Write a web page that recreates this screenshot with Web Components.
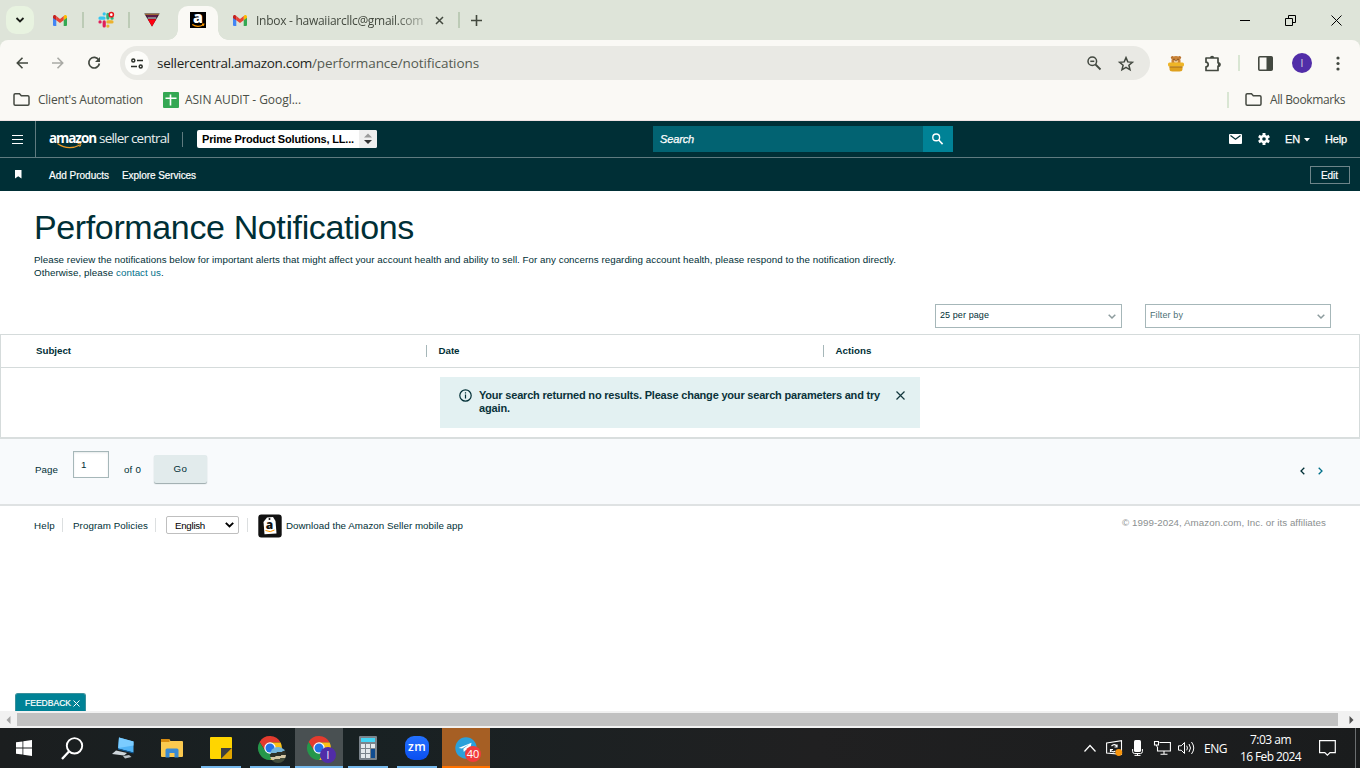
<!DOCTYPE html>
<html lang="en">
<head>
<meta charset="utf-8">
<title>Performance Notifications</title>
<style>
html,body{ margin:0; width:1360px; height:768px; overflow:hidden; background:#fff }
body{ display:flex; flex-direction:column; font-family:"Liberation Sans",Arial,sans-serif; color:#002f36 }
</style>
</head>
<body>
<tab-strip></tab-strip>
<address-bar></address-bar>
<bookmarks-bar></bookmarks-bar>
<seller-header></seller-header>
<seller-subnav></seller-subnav>
<notifications-page></notifications-page>
<scroll-track></scroll-track>
<task-bar></task-bar>

<script>
const UI = `font-family:"Open Sans","Noto Sans",sans-serif;`;

function define(name, html, setup) {
  customElements.define(name, class extends HTMLElement {
    constructor() {
      super();
      this.attachShadow({ mode: "open" }).innerHTML = html;
    }
    connectedCallback() {
      if (setup) setup(this, this.shadowRoot);
    }
  });
}

// One line of text, tracked so that it fills `w` pixels.
define("fit-text", `
<style>:host{ display:inline-block; flex:none; white-space:nowrap } span{ display:inline-block; white-space:nowrap }</style>
<span><slot></slot></span>`, (el, root) => {
  const span = root.querySelector("span");
  const w = parseFloat(el.getAttribute("w"));
  span.style.letterSpacing = "0";
  const natural = span.getBoundingClientRect().width;
  span.style.letterSpacing = (w - natural) / el.textContent.length + "px";
  el.style.width = w + "px";
});

// name: [width, height, markup]
const ICONS = {
  gmail: [14, 11, `<path d="M0 1.8V10a1 1 0 0 0 1 1h2.3V4.4z" fill="#4285f4"/><path d="M14 1.8V10a1 1 0 0 1-1 1h-2.3V4.4z" fill="#34a853"/><path d="M10.7 1.2V5.2L14 2.8V1.7C14 .2 12.300-.5 11.200.4z" fill="#fbbc04"/><path d="M3.300 5.200V1.100L7 3.900l3.700-2.800v4.100L7 8z" fill="#ea4335"/><path d="M0 1.700v1.200l3.300 2.400V1.100L2.700.5C1.600-.5 0 .200 0 1.700z" fill="#c5221f"/>`],
  slack: [16, 16, `<g stroke-width="3.200" stroke-linecap="round"><path d="M6.200 1.800v.1M2 6.200h4" stroke="#36c5f0"/><path d="M9.900 2.300v3.800M14 6.200h.1" stroke="#2eb67d"/><path d="M9.900 14v.1M9.900 9.900H14" stroke="#ecb22e"/><path d="M6.200 9.900V14M2 9.900h.1" stroke="#e01e5a"/></g><circle cx="13.300" cy="2.700" r="2.100" fill="#fff" stroke="#e8151b" stroke-width="1.500"/>`],
  vee: [16, 14, `<path d="M.3.400h15.400L8 13.500z" fill="#201628"/><path d="M1 1.300h14" stroke="#b97d3d"/><path d="M2.500 3h11" stroke="#8a1d58" stroke-width="1.200"/><path d="M3.700 5h8.600" stroke="#efe8ec"/><path d="M3.800 6.300h8.400L8 13.400z" fill="#ff0010"/>`],
  amazon: [16, 16, `<rect width="16" height="16" fill="#000"/><text x="8" y="11.300" text-anchor="middle" font-family="Open Sans" font-weight="800" font-size="16" fill="#fff">a</text><path d="M2.300 12.500q5.500 3.500 11 .200M12 12.200h1.800l-.5 1.500" fill="none" stroke="#f90" stroke-width="1.200"/>`],
  down: [10, 6, `<path d="M1.500 1 5 4.500 8.500 1" fill="none" stroke="#1b1f19" stroke-width="1.800"/>`],
  tabx: [9, 9, `<path d="m1 1 7 7M8 1 1 8" stroke="#43493f" stroke-width="1.500"/>`],
  plus: [11, 11, `<path d="M5.500 0v11M0 5.500h11" stroke="#43493f" stroke-width="1.600"/>`],
  min: [10, 11, `<path d="M0 5.500h10" stroke="#000"/>`],
  restore: [11, 11, `<path d="M.5 3.500h7v7h-7zM3.500 3V.500h7v7H8" fill="none" stroke="#000"/>`],
  close: [11, 11, `<path d="m.5.500 10 10M10.500.500l-10 10" stroke="#000"/>`],
  back: [12, 12, `<path d="M12 6H1.500M6.500.800 1.300 6l5.200 5.200" fill="none" stroke="#434940" stroke-width="1.600"/>`],
  fwd: [12, 12, `<path d="M0 6h10.500M5.500.800 10.700 6l-5.200 5.200" fill="none" stroke="#a9aaa5" stroke-width="1.600"/>`],
  reload: [14, 14, `<path d="M11.800 4.100A5.300 5.300 0 1 0 12.400 7.500" fill="none" stroke="#434940" stroke-width="1.700"/><path d="M13 1v5H8z" fill="#434940"/>`],
  tune: [12, 11, `<g fill="none" stroke="#2b2f29" stroke-width="1.500"><circle cx="2.300" cy="2.500" r="1.500"/><path d="M6 2.500h6M0 8.500h6"/><circle cx="9.700" cy="8.500" r="1.500"/></g>`],
  zoomout: [14, 14, `<g fill="none" stroke="#434940" stroke-width="1.500"><circle cx="5.300" cy="5.300" r="4.300"/><path d="M3.300 5.300h4"/><path d="m8.500 8.500 5 5" stroke-width="1.800"/></g>`],
  star: [16, 15, `<path d="m8 1.600 1.800 4.300 4.600.400-3.500 3 1.100 4.500L8 11.400l-4 2.400 1.100-4.500-3.500-3 4.600-.400z" fill="none" stroke="#434940" stroke-width="1.500"/>`],
  bear: [16, 17, `<circle cx="4.500" cy="2.600" r="1.600" fill="#b86f28"/><circle cx="11.500" cy="2.600" r="1.600" fill="#b86f28"/><path d="M3.500 8V5.500a4.500 4.500 0 0 1 9 0V8z" fill="#ca8438"/><ellipse cx="8" cy="6.500" rx="2" ry="1.500" fill="#f5d6a5"/><path d="M5.500 4.300h1M9.500 4.300h1M7.400 5.700h1.200" stroke="#4d280e"/><rect y="7.500" width="16" height="4" rx="1.500" fill="#efb526"/><path d="M1.500 11.500h13V14q0 2.500-3 2.500h-7q-3 0-3-2.500z" fill="#dfa11e"/><path d="M1.500 12h13" stroke="#a76c13"/>`],
  puzzle: [17, 17, `<path d="M2 3h12v4.800c2.600 0 2.600 3.400 0 3.400V15.500H2v-3.700c2.900 0 2.900-4.600 0-4.600z" fill="none" stroke="#434940" stroke-width="1.700" stroke-linejoin="round"/><path d="M6 3c0-3 4.200-3 4.200 0zM14 7.500c3 0 3 4 0 4z" fill="#434940"/>`],
  panel: [15, 15, `<rect x=".8" y=".8" width="13.400" height="13.400" rx="1" fill="none" stroke="#434940" stroke-width="1.600"/><path d="M8.500 1h5.700v13H8.500z" fill="#434940"/>`],
  dots: [4, 15, `<g fill="#434940"><circle cx="2" cy="2" r="1.600"/><circle cx="2" cy="7.500" r="1.600"/><circle cx="2" cy="13" r="1.600"/></g>`],
  folder: [17, 13, `<path d="M1 2q0-1.200 1.200-1.200H6.500l1.800 2h6.500Q16 2.800 16 4v7q0 1.200-1.200 1.200H2.200Q1 12.200 1 11z" fill="none" stroke="#454a42" stroke-width="1.500"/>`],
  sheet: [16, 16, `<rect width="16" height="16" rx="1" fill="#34a853"/><path d="M2.500 6.300h11M7.500 2.500v11" stroke="#fff" stroke-width="1.600"/>`],
  menu: [11, 9, `<path d="M0 .5h11M0 4.500h11M0 8.500h11" stroke="#fff" stroke-width="1.200"/>`],
  smile: [26, 6, `<path d="M.5.500Q11 8 23 2" fill="none" stroke="#f19a24" stroke-width="1.300"/><path d="M20.500.800q3-.800 3.500-.200.300.800-1.300 3.200" fill="none" stroke="#f19a24"/>`],
  updown: [8, 12, `<path d="m0 4.500 4-4 4 4z" fill="#9b9b9b"/><path d="m0 7 4 4 4-4z" fill="#333"/>`],
  search: [11, 12, `<circle cx="4.200" cy="4.400" r="3.400" fill="none" stroke="#fff" stroke-width="1.400"/><path d="m6.700 7 3.900 4.100" stroke="#fff" stroke-width="1.600"/>`],
  mail: [13, 10, `<rect width="13" height="10" rx="1" fill="#fff"/><path d="m1.500 1.500 5 3.800 5-3.800" fill="none" stroke="#002f36" stroke-width="1.200"/>`],
  gear: [12, 12, `<path d="M6 0v12M.8 3l10.400 6M.8 9l10.400-6" stroke="#fff" stroke-width="2.900"/><circle cx="6" cy="6" r="3.200" fill="none" stroke="#fff" stroke-width="2.200"/><circle cx="6" cy="6" r="1.800" fill="#002f36"/>`],
  caret: [6, 3, `<path d="M0 0h6L3 3.500z" fill="#fff"/>`],
  flag: [7, 9, `<path d="M0 0h6.500v8.500L3.200 6.300 0 8.500z" fill="#fff"/>`],
  chev: [8, 5, `<path d="M.7.700 4 4 7.300.700" fill="none" stroke="#8c9b9d" stroke-width="1.500"/>`],
  info: [13, 13, `<circle cx="6.500" cy="6.500" r="5.700" fill="none" stroke="#002f36" stroke-width="1.200"/><path d="M6.500 5.500v4M6.500 3.200v1.300" stroke="#002f36" stroke-width="1.200"/>`],
  x: [9, 9, `<path d="m.5.500 8 8M8.500.500l-8 8" stroke="#12373d" stroke-width="1.200"/>`],
  xw: [7, 7, `<path d="m.5.500 6 6M6.500.500l-6 6" stroke="#fff" stroke-width="1"/>`],
  left: [5, 8, `<path d="M4.300.700 1 4l3.300 3.300" fill="none" stroke="#002f36" stroke-width="1.300"/>`],
  right: [5, 8, `<path d="M.7.700 4 4 .7 7.300" fill="none" stroke="#00708a" stroke-width="1.300"/>`],
  seldown: [9, 6, `<path d="m.8.800 3.700 3.700L8.200.800" fill="none" stroke="#000" stroke-width="1.900"/>`],
  app: [24, 24, `<rect x=".3" y=".5" width="23.400" height="23" rx="3" fill="#111"/><path d="m9 3.500 6-.5 2.500 4 1 12.500-12 .8L5.500 8z" fill="#fff"/><circle cx="11.500" cy="5" r="1" fill="#111"/><text x="11.500" y="15" text-anchor="middle" font-family="Open Sans" font-weight="800" font-size="12" fill="#111">a</text><path d="M7.500 16.500q5 2.500 9-.500" fill="none" stroke="#f90"/>`],
  sleft: [5, 8, `<path d="M4.500 0v8L.5 4z" fill="#a3a3a3"/>`],
  sright: [5, 8, `<path d="M.5 0v8l4-4z" fill="#505050"/>`],
  win: [16, 16, `<path d="M0 2.300 6.500 1.400V7.500H0zM7.300 1.300 16 0v7.500H7.300zM0 8.400h6.500v6.200L0 13.700zM7.300 8.400H16V16l-8.700-1.300z" fill="#fff"/>`],
  find: [23, 23, `<circle cx="13.500" cy="8.800" r="7.700" fill="none" stroke="#fff" stroke-width="1.900"/><path d="m8 14.500-7 7.500" stroke="#fff" stroke-width="2.300"/>`],
  pc: [24, 22, `<path d="m8 .5 14.500 4V15.500L7 11.500z" fill="#51b3f5"/><path d="m8 .5 14.500 4v4L7.300 11z" fill="#7bccff"/><path d="m7 11.500 15.500 4v1L7 12.500z" fill="#0b5c9e"/><path d="m5 13.500 11 2.500-3 2.500-12-1.500z" fill="#cfd6da"/><path d="m12 19 6-1 2.500 2-6.500 1.500z" fill="#b8c0c5"/>`],
  files: [22, 19, `<path d="M0 1q0-1 1-1h7l1.500 2H21q1 0 1 1v14q0 1-1 1H1q-1 0-1-1z" fill="#fbc94f"/><path d="M0 1q0-1 1-1h7.500v3H0z" fill="#d98c10"/><path d="M4.500 11q0-1.500 1.500-1.500h10q1.500 0 1.500 1.500v7.500h-4V14h-5v4.500h-4z" fill="#398ad4"/>`],
  note: [22, 22, `<path d="M0 1q0-1 1-1h20q1 0 1 1v10L11 22H1q-1 0-1-1z" fill="#ffd500"/><path d="M11 22V11h11z" fill="#3e3e40"/><path d="M22 11v10q0 1-1 1H11z" fill="#e2a600"/>`],
  chrome: [24, 24, `<path d="M12 6.400h10.600A12 12 0 0 0 1.600 6l5.500 8.800L12 12z" fill="#e33b2e"/><path d="M22.600 6.400H12v5.600l4.900 2.800L12 24A12 12 0 0 0 22.600 6.400z" fill="#fbc116"/><path d="M1.600 6l5.500 8.800L12 12l4.900 2.800L12 24A12 12 0 0 1 1.600 6z" fill="#25974a"/><circle cx="12" cy="12" r="5.700" fill="#fff"/><circle cx="12" cy="12" r="4.500" fill="#2573e8"/>`],
  calc: [18, 24, `<rect width="18" height="24" rx="1" fill="#7b848c"/><rect x="2" y="2" width="14" height="4" fill="#43d5f5"/><g fill="#e4e9ec"><path d="M2 8h4v4H2zM7 8h4v4H7zM12 8h4v4h-4zM2 13h4v4H2zM7 13h4v4H7zM2 18h4v4H2zM7 18h4v4H7z"/></g><path d="M12 13h4v9h-4z" fill="#0f4c91"/>`],
  plane: [22, 22, `<circle cx="11" cy="11" r="10.700" fill="#2ba0da"/><path d="m3.500 11 13-5.200-2 10-4-2.500-1.700 1.600-.5-3.200 6-4.500-7.300 4.400z" fill="#fff"/>`],
  up: [12, 7, `<path d="m.5 6.500 5.500-6 5.500 6" fill="none" stroke="#fff" stroke-width="1.200"/>`],
  update: [17, 16, `<path d="M.6 3 15.500.600v13.800L.6 13z" fill="none" stroke="#fff" stroke-width="1.100"/><path d="M11 4.500v2.500H8.500M11 6.500Q8.500 3 5.500 6M4.500 12V9.500H7M4.500 10q2 3 5 1" fill="none" stroke="#fff" stroke-width="1.200"/><circle cx="12.800" cy="12.500" r="3.400" fill="#f8950d"/>`],
  mic: [11, 16, `<rect x="2" width="7" height="12" rx="1.500" fill="#fff"/><path d="M.6 9v2.500q0 2 2 2h5.800q2 0 2-2V9M5.500 13v2.500M2.500 15.400h6" fill="none" stroke="#fff"/>`],
  net: [17, 14, `<path d="M5.500 1.500h10.900v8.500H3.500V5.500M10 10v3.300M6.500 13.300h7M.5.500h4v3.500h-4zM2.500 4v1.500" fill="none" stroke="#fff" stroke-width="1.100"/>`],
  sound: [17, 14, `<path d="M.5 4.800h2.700L6.500 1.500v11L3.200 9.200H.5zM8.700 4.700q1.500 2.300 0 4.600M11 3q3 4 0 8M13.500 1q4.500 6 0 12" fill="none" stroke="#fff"/>`],
  chat: [17, 16, `<path d="M.6.600h15.700v12H11l-2.600 2.600L5.800 12.600H.6z" fill="none" stroke="#fff" stroke-width="1.200"/>`],
};

define("ui-icon", `<style>:host,div{ display:block; flex:none } svg{ display:block; overflow:visible }</style><div></div>`, (el, root) => {
  const [w, h, body] = ICONS[el.getAttribute("name")];
  root.querySelector("div").innerHTML = `<svg width="${w}" height="${h}" viewBox="0 0 ${w} ${h}" aria-hidden="true">${body}</svg>`;
});

define("tab-strip", `
<style>
:host{ display:flex; flex:none; height:40px; box-sizing:border-box; padding-left:6px; background:#dee4d9; align-items:center; ${UI} font-size:12px; color:#43493f }
.cell{ width:40px; height:28px; display:grid; place-items:center }
.list{ width:28px; border-radius:10px; background:#e8f3e0; margin-right:6px }
.sep{ width:2px; height:16px; margin:0 2px; background:#bccbb6 }
.active{ align-self:flex-end; height:34px; margin-left:6px; background:#faf9f5; border-radius:10px 10px 0 0; position:relative; box-sizing:border-box; padding-bottom:6px }
.active::before,.active::after{ content:""; position:absolute; bottom:0; width:10px; height:10px; background:radial-gradient(circle at 0 0,transparent 9.5px,#faf9f5 10px) }
.active::before{ left:-10px } .active::after{ right:-10px; transform:scaleX(-1) }
.tab{ display:flex; align-items:center; width:240px; box-sizing:border-box; padding-left:15px }
.title{ margin:0 12px 0 9px; -webkit-mask:linear-gradient(90deg,#000 82%,rgba(0,0,0,.35) 99%) }
.plus{ margin-left:10px }
.win{ margin-left:auto; display:flex; gap:35px; margin-right:18px }
</style>
<div class="cell list"><ui-icon name="down"></ui-icon></div>
<div class="cell"><ui-icon name="gmail"></ui-icon></div><div class="sep"></div>
<div class="cell"><ui-icon name="slack"></ui-icon></div><div class="sep"></div>
<div class="cell"><ui-icon name="vee"></ui-icon></div>
<div class="cell active"><ui-icon name="amazon"></ui-icon></div>
<div class="tab"><ui-icon name="gmail"></ui-icon><fit-text class="title" w="167">Inbox - hawaiiarcllc@gmail.com</fit-text><ui-icon name="tabx"></ui-icon></div>
<div class="sep" style="margin:0"></div>
<ui-icon class="plus" name="plus" style="margin-left:11px"></ui-icon>
<div class="win"><ui-icon name="min"></ui-icon><ui-icon name="restore"></ui-icon><ui-icon name="close"></ui-icon></div>`);

define("address-bar", `
<style>
:host{ display:block; flex:none; height:46px; background:#dee4d9; ${UI} }
.bar{ display:flex; height:46px; align-items:center; background:#faf9f5; border-radius:8px 8px 0 0; padding-left:16px; box-sizing:border-box }
.nav{ display:flex; gap:24px; align-items:center; width:104px }
.pill{ display:flex; align-items:center; width:1030px; height:34px; border-radius:17px; background:#e9e9e4; box-sizing:border-box; padding:0 16px 0 5px; font-size:13.5px; color:#1d1f1b }
.site{ width:24px; height:24px; border-radius:50%; background:#fdfdfa; display:grid; place-items:center; margin-right:8px }
.path{ color:#555b52 }
.tools{ margin-left:auto; display:flex; gap:17px; align-items:center }
.right{ display:flex; align-items:center; margin-left:18px }
.sep{ width:2px; height:16px; background:#d9e6d3; margin:0 18px 0 17px }
.me{ width:20px; height:20px; border-radius:50%; background:#512da8; color:#ddd; font-size:10px; line-height:20px; text-align:center; margin:0 24px 0 19px }
</style>
<div class="bar">
  <div class="nav"><ui-icon name="back"></ui-icon><ui-icon name="fwd"></ui-icon><ui-icon name="reload" style="margin-left:-1px"></ui-icon></div>
  <div class="pill">
    <div class="site"><ui-icon name="tune"></ui-icon></div>
    <fit-text w="155">sellercentral.amazon.com</fit-text><fit-text class="path" w="167">/performance/notifications</fit-text>
    <div class="tools"><ui-icon name="zoomout"></ui-icon><ui-icon name="star"></ui-icon></div>
  </div>
  <div class="right"><ui-icon name="bear"></ui-icon><ui-icon name="puzzle" style="margin-left:20px"></ui-icon><div class="sep"></div><ui-icon name="panel"></ui-icon><div class="me">I</div><ui-icon name="dots"></ui-icon></div>
</div>`);

define("bookmarks-bar", `
<style>
:host{ display:flex; flex:none; height:35px; box-sizing:border-box; padding:0 15px 7px 13px; align-items:center; background:#faf9f5; border-bottom:1px solid #efe3e4; ${UI} font-size:12px; color:#4a4f47 }
ui-icon + fit-text{ margin-left:8px }
.sheet{ margin-left:20px }
.sheet + fit-text{ margin-left:6px !important }
.sep{ margin-left:auto; width:2px; height:16px; background:#d9e6d3; margin-right:16px }
</style>
<ui-icon name="folder"></ui-icon><fit-text w="105">Client's Automation</fit-text>
<ui-icon class="sheet" name="sheet"></ui-icon><fit-text w="116">ASIN AUDIT - Googl...</fit-text>
<div class="sep"></div><ui-icon name="folder"></ui-icon><fit-text w="75">All Bookmarks</fit-text>`);

define("seller-header", `
<style>
:host{ display:flex; flex:none; height:37px; box-sizing:border-box; border-bottom:1px solid #5f7b80; background:#002f36; color:#fff; align-items:center; font-size:11px; font-weight:400; -webkit-text-stroke:.25px #fff }
.menu{ width:36px; height:36px; box-sizing:border-box; border-right:1px solid #5f7b80; display:grid; place-items:center }
.logo{ position:relative; display:flex; margin-left:13px; height:20px; line-height:18px; ${UI} font-size:13.5px; -webkit-text-stroke:0 }
.logo b{ margin-right:3px; font-weight:700 } .logo .sc{ font-weight:400; color:#e8eeee }
.logo ui-icon{ position:absolute; left:8px; top:14px }
.bar{ width:1px; height:15px; background:#5f7b80; margin:0 14px 0 13px }
.store{ display:flex; width:180px; height:18px; box-sizing:border-box; background:#fff; border-radius:2px; color:#000; align-items:center; justify-content:space-between; padding-left:5px; overflow:hidden; font-weight:700; -webkit-text-stroke:0 }
.knob{ width:18px; height:18px; background:#efefef; display:grid; place-items:center }
.search{ display:flex; width:300px; height:26px; margin-left:276px; background:#026372; align-items:center; box-sizing:border-box; padding-left:7px; justify-content:space-between; font-style:italic }
.go{ width:30px; height:26px; box-sizing:border-box; padding-right:2px; background:#008296; display:grid; place-items:center }
.right{ margin-left:auto; margin-right:13px; display:flex; align-items:center }
</style>
<div class="menu"><ui-icon name="menu"></ui-icon></div>
<div class="logo"><b><fit-text w="47">amazon</fit-text></b><fit-text class="sc" w="70">seller central</fit-text><ui-icon name="smile"></ui-icon></div>
<div class="bar"></div>
<div class="store"><fit-text w="152">Prime Product Solutions, LL...</fit-text><div class="knob"><ui-icon name="updown"></ui-icon></div></div>
<div class="search"><fit-text w="34">Search</fit-text><div class="go"><ui-icon name="search"></ui-icon></div></div>
<div class="right"><ui-icon name="mail"></ui-icon><ui-icon name="gear" style="margin:0 15px 0 16px"></ui-icon><fit-text w="15">EN</fit-text><ui-icon name="caret" style="margin:0 15px 0 4px"></ui-icon><fit-text w="22">Help</fit-text></div>`);

define("seller-subnav", `
<style>
:host{ display:flex; flex:none; height:33px; box-sizing:border-box; background:#002f36; color:#fff; align-items:center; padding:1px 10px 0 15px; font-size:10px; -webkit-text-stroke:.2px #fff }
.edit{ margin-left:auto; width:40px; height:18px; box-sizing:border-box; border:1px solid #6d8589; display:grid; place-items:center; padding-right:1px }
</style>
<ui-icon name="flag" style="margin:-2px 27px 0 0"></ui-icon>
<fit-text w="60">Add Products</fit-text><fit-text w="74" style="margin-left:13px">Explore Services</fit-text>
<div class="edit"><fit-text w="17">Edit</fit-text></div>`);

define("select-box", `
<style>
:host{ display:flex; box-sizing:border-box; height:24px; border:1px solid #a6b7b9; padding:0 5px 2px 4px; align-items:center; justify-content:space-between; font-size:9px; background:#fff }
ui-icon{ margin-top:3px }
</style>
<slot></slot><ui-icon name="chev"></ui-icon>`);

define("notice-box", `
<style>
:host{ display:flex; width:480px; height:51px; box-sizing:border-box; background:#e3f1f2; padding:12px 15px 0 19px; font-size:11px; line-height:13px; font-weight:700; color:#0a333a }
.msg{ margin:0 16px 0 7px; width:401px; display:flex; flex-direction:column; align-items:flex-start }
</style>
<ui-icon name="info"></ui-icon><div class="msg"><slot></slot></div><ui-icon name="x" style="margin-top:2px"></ui-icon>`);

define("pager-bar", `
<style>
:host{ display:flex; flex:none; height:69px; box-sizing:border-box; border-top:2px solid #d9dede; border-bottom:2px solid #dfe2e3; background:#f8fafc; padding:12px 36px 0 35px; align-items:flex-start; font-size:9.75px; line-height:12px }
.in{ width:36px; height:27px; box-sizing:border-box; border:1px solid #a6b7b9; background:#fff; box-shadow:inset 0 1px 2px #e5e9ea; padding:7px 0 0 7px; margin:0 15px }
.go{ width:53px; height:28px; margin:4px 0 0 13px; box-sizing:border-box; background:#e2ebec; box-shadow:0 1px 1px #9ba9ab; border-radius:2px; display:flex; justify-content:center; padding-top:8px }
.lbl{ margin-top:13px }
.arrows{ margin:16px 1px 0 auto; display:flex; gap:13px }
</style>
<fit-text class="lbl" w="23">Page</fit-text><div class="in">1</div><fit-text class="lbl" w="17">of 0</fit-text>
<div class="go"><fit-text w="14">Go</fit-text></div>
<div class="arrows"><ui-icon name="left"></ui-icon><ui-icon name="right"></ui-icon></div>`);

define("page-footer", `
<style>
:host{ display:flex; flex:none; height:40px; padding:0 34px; align-items:center; font-size:9.75px; box-sizing:border-box }
.sep{ width:1px; height:14px; background:#dcdfe0 }
.lang{ width:73px; height:18px; box-sizing:border-box; border:1px solid #bfbfbf; border-radius:2px; display:flex; align-items:center; justify-content:space-between; padding:0 4px 0 8px; color:#000; margin:0 8px 0 10px }
.copy{ margin-left:auto; margin-top:-5px; color:#8b8f90 }
</style>
<fit-text w="21">Help</fit-text><div class="sep" style="margin:0 10px 0 7px"></div>
<fit-text w="75">Program Policies</fit-text><div class="sep" style="margin-left:7px"></div>
<div class="lang"><fit-text w="30">English</fit-text><ui-icon name="seldown"></ui-icon></div><div class="sep" style="margin-right:10px"></div>
<ui-icon name="app" style="margin-top:2px"></ui-icon><fit-text w="177" style="margin-left:4px">Download the Amazon Seller mobile app</fit-text>
<fit-text class="copy" w="204">© 1999-2024, Amazon.com, Inc. or its affiliates</fit-text>`);

define("notifications-page", `
<style>
:host{ display:flex; flex:none; flex-direction:column; height:520px; background:#fff; font-size:9.75px }
.intro{ padding:16px 0 0 34px; height:97px; line-height:13px }
h1{ margin:0 0 6px; font-size:34px; line-height:40px; font-weight:400 }
.intro fit-text{ display:block }
.intro .last{ display:flex } .link{ color:#00708a }
.filters{ display:flex; justify-content:flex-end; gap:23px; padding-right:29px; height:30px }
.filters select-box{ width:187px } .filters select-box + select-box{ width:186px; color:#4d7074 }
.table{ border:1px solid #d5dbdb; border-bottom:0; height:103px; box-sizing:border-box }
.head{ display:flex; align-items:center; height:32px; border-bottom:1px solid #d5dbdb; font-weight:700; font-size:9.75px }
.head div{ width:397px; box-sizing:border-box; height:12px; line-height:12px; border-left:1px solid #a6b7b9; padding-left:11.5px }
.head div:first-child{ width:425px; border:0; padding-left:35px }
.body{ display:flex; justify-content:center; padding-top:9px }
page-footer{ margin-top:-1px }
.feedback{ margin:auto 0 0 15px; width:71px; height:18px; box-sizing:border-box; background:#008296; border:1px solid #39909b; border-bottom:0; border-radius:3px 3px 0 0; color:#fff; font-size:8.500px; display:flex; align-items:center; padding-left:9px; -webkit-text-stroke:.2px #fff }
</style>
<div class="intro">
  <h1><fit-text w="380">Performance Notifications</fit-text></h1>
  <fit-text w="862">Please review the notifications below for important alerts that might affect your account health and ability to sell. For any concerns regarding account health, please respond to the notification directly.</fit-text>
  <div class="last"><fit-text w="82">Otherwise, please&nbsp;</fit-text><fit-text class="link" w="45">contact us</fit-text>.</div>
</div>
<div class="filters"><select-box><fit-text w="49">25 per page</fit-text></select-box><select-box><fit-text w="33">Filter by</fit-text></select-box></div>
<div class="table">
  <div class="head"><div><fit-text w="35">Subject</fit-text></div><div><fit-text w="21">Date</fit-text></div><div><fit-text w="36">Actions</fit-text></div></div>
  <div class="body"><notice-box><fit-text w="401">Your search returned no results. Please change your search parameters and try</fit-text><fit-text w="31">again.</fit-text></notice-box></div>
</div>
<pager-bar></pager-bar>
<page-footer></page-footer>
<div class="feedback"><fit-text w="46">FEEDBACK</fit-text><ui-icon name="xw" style="margin:2px 0 0 2px"></ui-icon></div>`);

define("scroll-track", `
<style>
:host{ display:flex; flex:none; height:17px; box-sizing:border-box; background:#f1f1f1; align-items:center; padding:0 6px }
.thumb{ flex:1; height:13px; background:#c1c1c1; margin:0 11px 0 6px }
</style>
<ui-icon name="sleft"></ui-icon><div class="thumb"></div><ui-icon name="sright"></ui-icon>`);

define("task-item", `
<style>
:host{ display:grid; flex:none; width:48px; height:40px; box-sizing:border-box; place-items:center; position:relative }
:host([open])::after{ content:""; position:absolute; left:4px; right:4px; bottom:0; height:2px; background:#76b9ed }
:host([current]){ background:#495052 } :host([current])::after,:host([alert])::after{ left:0; right:0 }
:host([alert]){ background:#a65f24 } :host([alert])::after{ background:#ff7200 }
</style><slot></slot>`);

define("task-bar", `
<style>
:host{ display:flex; flex:none; height:40px; background:linear-gradient(90deg,#1b1e1f,#182123 25%,#202021 60%,#1a1c1d); align-items:center; ${UI} color:#fff; font-size:12px }
.apps{ display:flex; gap:1px; margin-left:1px }
.badge{ position:absolute; right:8px; bottom:5px; width:16px; height:16px; border-radius:50%; color:#fff; font-size:10px; line-height:16px; text-align:center }
.me{ background:#512da8; right:7px } .num{ background:#f23b3b; right:9px; bottom:6px; font-size:11px }
.zm{ width:24px; height:24px; border-radius:9px; background:linear-gradient(#2371ff,#0b4ff0); font-weight:600; font-size:12px; line-height:22px; text-align:center }
.tray{ margin-left:auto; display:flex; align-items:center }
.clock{ display:flex; flex-direction:column; align-items:center; line-height:17px; margin:0 18px 0 13px }
.edge{ width:1px; height:40px; background:#6b6e70; margin:0 4px 0 19px }
.hat{ background:linear-gradient(170deg,#73b4da 35%,#2d3028 36% 55%,#d3c6a5 56% 70%,#414b3b 71%) }
</style>
<div class="apps">
  <task-item style="left:-1px"><ui-icon name="win"></ui-icon></task-item>
  <task-item style="left:-2px"><ui-icon name="find"></ui-icon></task-item>
  <task-item><ui-icon name="pc"></ui-icon></task-item>
  <task-item><ui-icon name="files"></ui-icon></task-item>
  <task-item open><ui-icon name="note"></ui-icon></task-item>
  <task-item open><ui-icon name="chrome"></ui-icon><span class="badge hat"></span></task-item>
  <task-item open current><ui-icon name="chrome"></ui-icon><span class="badge me">I</span></task-item>
  <task-item open><ui-icon name="calc"></ui-icon></task-item>
  <task-item open><div class="zm"><fit-text w="18">zm</fit-text></div></task-item>
  <task-item open alert><ui-icon name="plane"></ui-icon><span class="badge num">40</span></task-item>
</div>
<div class="tray">
  <ui-icon name="up"></ui-icon><ui-icon name="update" style="margin-left:10px"></ui-icon><ui-icon name="mic" style="margin-left:9px"></ui-icon><ui-icon name="net" style="margin-left:11px"></ui-icon><ui-icon name="sound" style="margin:0 9px 0 7px"></ui-icon><fit-text w="23">ENG</fit-text>
  <div class="clock"><fit-text w="41">7:03 am</fit-text><fit-text w="61">16 Feb 2024</fit-text></div>
  <ui-icon name="chat"></ui-icon><div class="edge"></div>
</div>`);
</script>
</body>
</html>
